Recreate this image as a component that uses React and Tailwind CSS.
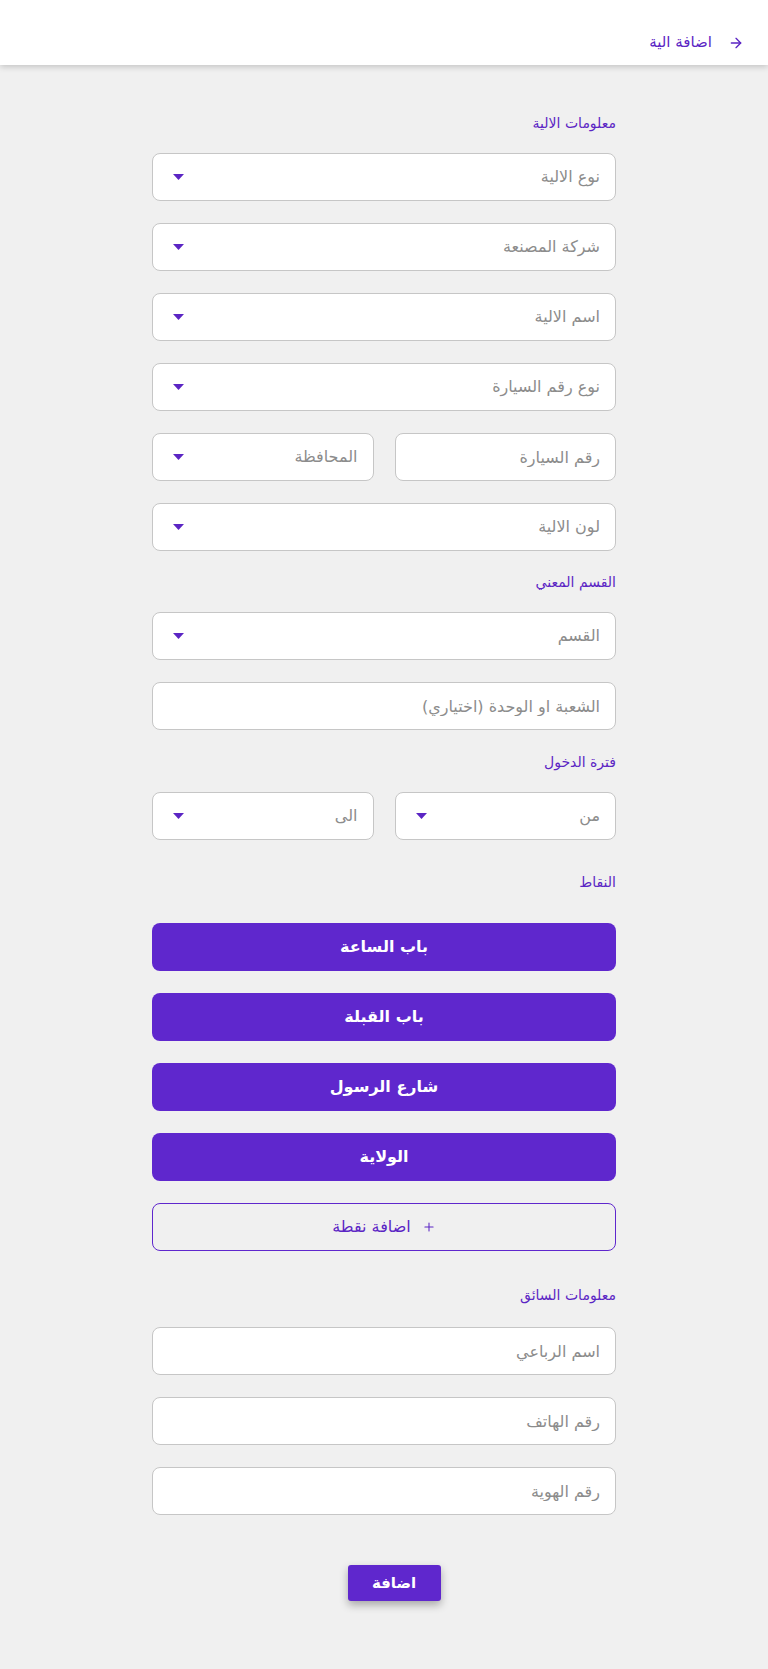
import { ArrowRight, Plus } from "lucide-react";

const font = { fontFamily: '"DejaVu Sans", "Noto Sans", sans-serif' };

const Label = ({ children, className = "" }) => (
  <div className={`h-5 leading-5 text-[14px] font-medium text-[#5b25c4] ${className}`}>
    {children}
  </div>
);

const Caret = () => (
  <svg width="11" height="6" viewBox="0 0 11 6" className="shrink-0">
    <path d="M0 0h11L5.5 6z" fill="#5b25c4" />
  </svg>
);

const Select = ({ placeholder, className = "" }) => (
  <div
    className={`h-[48px] rounded-lg border border-[#c6c6c6] bg-white flex items-center justify-between pr-[15px] pl-[20px] ${className}`}
  >
    <span className="text-[16px] text-[#8c8c8c]">{placeholder}</span>
    <Caret />
  </div>
);

const Field = ({ placeholder, className = "" }) => (
  <input
    placeholder={placeholder}
    className={`block w-full h-[48px] rounded-lg border border-[#c6c6c6] bg-white px-[15px] text-[16px] text-gray-800 placeholder:text-[#8c8c8c] outline-none ${className}`}
  />
);

const PointButton = ({ children }) => (
  <button className="w-full h-[48px] mb-[22px] rounded-lg bg-[#5f27cd] text-white text-[16px] font-bold flex items-center justify-center">
    {children}
  </button>
);

export default function App() {
  return (
    <div dir="rtl" style={font} className="min-h-screen bg-[#f0f0f0] pb-[68px]">
      <header className="h-[65px] bg-white shadow-[0_2px_6px_rgba(0,0,0,0.18)] flex items-center pt-[20px] pr-[24px] gap-[16px] text-[#5b25c4]">
        <ArrowRight size={16} strokeWidth={2} />
        <span className="text-[15px] font-medium">اضافة الية</span>
      </header>

      <div className="w-[464px] mx-auto">
        <Label className="mt-[48px] mb-5">معلومات الالية</Label>
        <Select placeholder="نوع الالية" className="mb-[22px]" />
        <Select placeholder="شركة المصنعة" className="mb-[22px]" />
        <Select placeholder="اسم الالية" className="mb-[22px]" />
        <Select placeholder="نوع رقم السيارة" className="mb-[22px]" />
        <div className="grid grid-cols-2 gap-[21px] mb-[22px]">
          <Field placeholder="رقم السيارة" />
          <Select placeholder="المحافظة" />
        </div>
        <Select placeholder="لون الالية" className="mb-[21px]" />

        <Label className="mb-5">القسم المعني</Label>
        <Select placeholder="القسم" className="mb-[22px]" />
        <Field placeholder="الشعبة او الوحدة (اختياري)" className="mb-[22px]" />

        <Label className="mb-5">فترة الدخول</Label>
        <div className="grid grid-cols-2 gap-[21px] mb-[32px]">
          <Select placeholder="من" />
          <Select placeholder="الى" />
        </div>

        <Label className="mb-[31px]">النقاط</Label>
        <PointButton>باب الساعة</PointButton>
        <PointButton>باب القبلة</PointButton>
        <PointButton>شارع الرسول</PointButton>
        <PointButton>الولاية</PointButton>
        <button className="w-full h-[48px] rounded-lg border border-[#5f27cd] text-[#5b25c4] text-[16px] flex items-center justify-center gap-[11px]">
          <Plus size={14} strokeWidth={1.8} />
          <span>اضافة نقطة</span>
        </button>

        <Label className="mt-[34px] mb-[22px]">معلومات السائق</Label>
        <Field placeholder="اسم الرباعي" className="mb-[22px]" />
        <Field placeholder="رقم الهاتف" className="mb-[22px]" />
        <Field placeholder="رقم الهوية" />

        <div className="flex justify-center mt-[50px]">
          <button className="w-[93px] h-[36px] ml-[20px] rounded-[3px] bg-[#5f27cd] text-white text-[15px] font-bold shadow-[0_4px_8px_rgba(0,0,0,0.3)]">
            اضافة
          </button>
        </div>
      </div>
    </div>
  );
}
